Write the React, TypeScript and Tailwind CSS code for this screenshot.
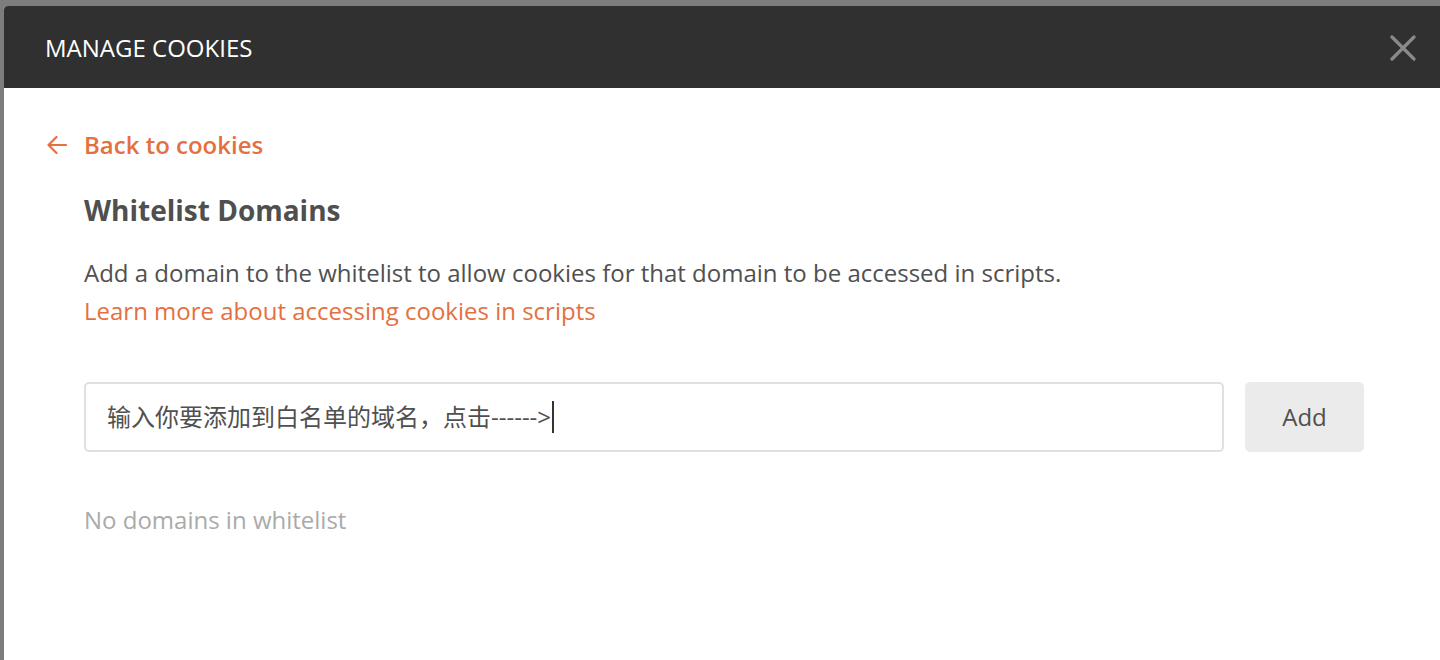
import React from "react";

export default function App() {
  const font = { fontFamily: '"Open Sans", "Noto Sans CJK SC", sans-serif' };
  return (
    <div
      className="w-[1440px] h-[660px] bg-[#7d7d7d] pt-[6px] pl-[4px] overflow-hidden flex"
      style={font}
    >
      <div className="flex-1 h-full bg-white rounded-tl-[4px] overflow-hidden flex flex-col">
        <div className="h-[82px] bg-[#303030] flex items-center justify-between pl-[41px] pr-[24px] shrink-0">
          <span className="text-white text-[24px] leading-[32px] pt-[1px]">MANAGE COOKIES</span>
          <svg width="26" height="26" viewBox="0 0 26 26" fill="none" className="mt-[1px]">
            <path d="M2 2 L24 24 M24 2 L2 24" stroke="#8a8a8a" strokeWidth="3.2" strokeLinecap="round" />
          </svg>
        </div>
        <div className="flex flex-col pl-[43px] pt-[41px]">
          <div className="flex items-center text-[#e5703f] text-[24px] font-semibold h-[32px]">
            <svg width="20" height="20" viewBox="0 0 20 20" fill="none" className="mr-[17px]">
              <path d="M19 10 H1.5 M9.5 2 L1.5 10 L9.5 18" stroke="#e5703f" strokeWidth="2.2" strokeLinecap="round" strokeLinejoin="round" />
            </svg>
            <span>Back to cookies</span>
          </div>
          <div className="pl-[37px] pr-[76px] flex flex-col">
            <h2 className="text-[#4f4f4f] text-[28px] font-bold mt-[32px] leading-[34px]">Whitelist Domains</h2>
            <p className="text-[#505050] text-[24px] mt-[27px] leading-[38px]">
              Add a domain to the whitelist to allow cookies for that domain to be accessed in scripts.
            </p>
            <a className="text-[#e5703f] text-[24px] leading-[38px]">Learn more about accessing cookies in scripts</a>
            <div className="flex items-center gap-[21px] mt-[52px]">
              <div className="flex-1 h-[70px] border-2 border-[#e0e0e0] rounded-[5px] flex items-center pl-[21px] text-[24px] text-[#505050]">
                <span>输入你要添加到白名单的域名，点击------&gt;</span>
                <span className="inline-block w-[2px] h-[32px] bg-[#333] ml-[1px]" />
              </div>
              <button className="w-[119px] h-[70px] bg-[#ebebeb] rounded-[5px] text-[#505050] text-[24px]">
                Add
              </button>
            </div>
            <div className="text-[#aaaaaa] text-[24px] mt-[52px] leading-[32px]">No domains in whitelist</div>
          </div>
        </div>
      </div>
    </div>
  );
}
